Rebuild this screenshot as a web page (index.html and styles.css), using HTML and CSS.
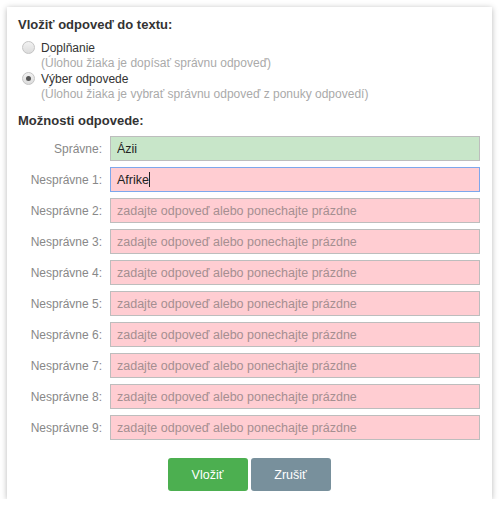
FILE: index.html
```html
<!DOCTYPE html>
<html>
<head>
<meta charset="utf-8">
<link rel="stylesheet" href="styles.css">
</head>
<body>
<div class="panel">
  <div class="title">Vložiť odpoveď do textu:</div>
  <label class="option first">
    <span class="radio"></span>
    <span class="opt-text">
      <span class="opt-label">Doplňanie</span>
      <span class="hint">(Úlohou žiaka je dopísať správnu odpoveď)</span>
    </span>
  </label>
  <label class="option">
    <span class="radio checked"></span>
    <span class="opt-text">
      <span class="opt-label">Výber odpovede</span>
      <span class="hint">(Úlohou žiaka je vybrať správnu odpoveď z ponuky odpovedí)</span>
    </span>
  </label>
  <div class="title sub">Možnosti odpovede:</div>
  <div class="rows">
    <div class="row"><span class="lbl">Správne:</span><input class="inp ok" value="Ázii"></div>
    <div class="row"><span class="lbl">Nesprávne 1:</span><div class="inp bad focus">Afrike<span class="caret"></span></div></div>
    <div class="row"><span class="lbl">Nesprávne 2:</span><input class="inp bad" placeholder="zadajte odpoveď alebo ponechajte prázdne"></div>
    <div class="row"><span class="lbl">Nesprávne 3:</span><input class="inp bad" placeholder="zadajte odpoveď alebo ponechajte prázdne"></div>
    <div class="row"><span class="lbl">Nesprávne 4:</span><input class="inp bad" placeholder="zadajte odpoveď alebo ponechajte prázdne"></div>
    <div class="row"><span class="lbl">Nesprávne 5:</span><input class="inp bad" placeholder="zadajte odpoveď alebo ponechajte prázdne"></div>
    <div class="row"><span class="lbl">Nesprávne 6:</span><input class="inp bad" placeholder="zadajte odpoveď alebo ponechajte prázdne"></div>
    <div class="row"><span class="lbl">Nesprávne 7:</span><input class="inp bad" placeholder="zadajte odpoveď alebo ponechajte prázdne"></div>
    <div class="row"><span class="lbl">Nesprávne 8:</span><input class="inp bad" placeholder="zadajte odpoveď alebo ponechajte prázdne"></div>
    <div class="row"><span class="lbl">Nesprávne 9:</span><input class="inp bad" placeholder="zadajte odpoveď alebo ponechajte prázdne"></div>
  </div>
  <div class="buttons">
    <button class="btn insert">Vložiť</button>
    <button class="btn cancel">Zrušiť</button>
  </div>
</div>
</body>
</html>
```
FILE: styles.css
```css
* { box-sizing: border-box; }
html, body { margin: 0; padding: 0; background: #fff; }
body {
  font-family: "Liberation Sans", Arial, sans-serif;
  font-size: 12px;
  color: #333;
  padding: 7px 0 0 7px;
}
.panel {
  width: 485px;
  height: 492px;
  background: #fff;
  box-shadow: 0 1px 6px rgba(0,0,0,0.28);
  padding: 9px 12px 8px 11px;
  display: flex;
  flex-direction: column;
}
.title {
  font-weight: bold;
  font-size: 13px;
  line-height: 16px;
  color: #333;
  margin-top: 1px;
}
.option {
  display: flex;
  align-items: flex-start;
  margin-left: 4px;
}
.option.first { margin-top: 7px; }
.radio {
  width: 13px;
  height: 13px;
  border-radius: 50%;
  border: 1px solid #c4c4c4;
  background: linear-gradient(#f2f2f2, #dcdcdc);
  margin-top: 1px;
  margin-right: 6px;
  flex: none;
  position: relative;
}
.radio.checked::after {
  content: "";
  position: absolute;
  left: 3px;
  top: 3px;
  width: 5px;
  height: 5px;
  border-radius: 50%;
  background: #555;
}
.opt-text { display: flex; flex-direction: column; }
.opt-label { line-height: 16px; color: #333; }
.hint { line-height: 15px; color: #aaa; }
.sub { margin-top: 11px; }
.rows {
  margin-top: 7px;
  display: flex;
  flex-direction: column;
  gap: 6px;
}
.row {
  display: flex;
  align-items: center;
}
.lbl {
  width: 92px;
  text-align: right;
  padding-right: 8px;
  color: #888;
  flex: none;
}
.inp {
  flex: 1;
  height: 25px;
  border: 1px solid #bdbdbd;
  padding: 0 6px;
  font-family: "Liberation Sans", Arial, sans-serif;
  font-size: 12.5px;
  color: #222;
  outline: none;
  margin: 0;
  display: flex;
  align-items: center;
}
.inp.ok { background: #c8e6c9; }
.inp.bad { background: #ffcdd2; }
.inp.focus { border-color: #7da7ec; }
.inp::placeholder { color: #a58f91; opacity: 1; }
.caret {
  display: inline-block;
  width: 1px;
  height: 15px;
  background: #222;
}
.buttons {
  margin-top: 18px;
  display: flex;
  justify-content: center;
  gap: 3px;
}
.btn {
  width: 80px;
  height: 33px;
  border: none;
  border-radius: 3px;
  color: #fff;
  font-family: "Liberation Sans", Arial, sans-serif;
  font-size: 12.5px;
}
.insert { background: #4caf50; }
.cancel { background: #78909c; }
```
